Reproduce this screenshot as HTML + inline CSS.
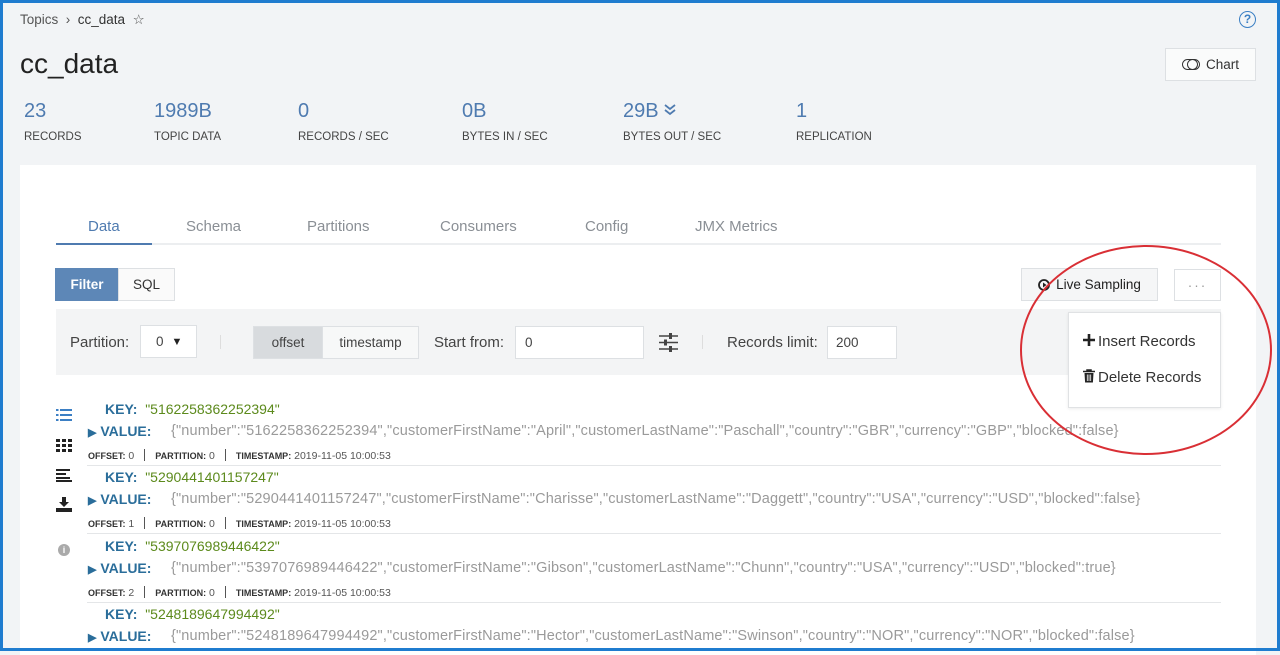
<!DOCTYPE html>
<html><head><meta charset="utf-8"><style>
*{margin:0;padding:0;box-sizing:border-box}
body{width:1280px;height:651px;overflow:hidden;font-family:"Liberation Sans",sans-serif;background:#f2f4f6;position:relative;color:#333}
.frame{position:absolute;left:0;top:0;width:1280px;height:651px;border:3px solid #1f7ccf;z-index:50;pointer-events:none}
.a{position:absolute;white-space:nowrap}
.stat .n{font-size:20px;color:#4f7bb0}
.stat .l{font-size:11.5px;color:#444;margin-top:8px}
.panel{position:absolute;left:20px;top:165px;width:1236px;height:490px;background:#fff}
.tab{position:absolute;top:218px;font-size:15px;color:#8a8f95}
.btn{position:absolute;border:1px solid #dde0e3;background:#f5f6f7;font-size:13.5px;display:flex;align-items:center;justify-content:center}
.key{font-size:14px}
.kl{color:#2a6d9a;font-weight:bold}
.kv{color:#5c8a1c}
.val{font-size:14.5px;color:#9a9a9a;letter-spacing:0.15px}
.meta{font-size:10.5px;color:#555}
.meta b{font-size:9px;color:#333}
.meta .sep{display:inline-block;width:1px;height:12px;background:#555;margin:0 10px;vertical-align:-2px}
.hr{position:absolute;left:87px;width:1134px;height:1px;background:#e4e6e8}
</style></head><body>
<div class="frame"></div>
<div class="a" style="left:20px;top:12px;font-size:13.5px;color:#555">Topics &nbsp;›&nbsp; <span style="color:#333">cc_data</span> &nbsp;☆</div>
<div class="a" style="left:1239px;top:11px;width:17px;height:17px;border:1.6px solid #3b7fc4;border-radius:50%;color:#3b7fc4;font-size:12px;font-weight:bold;text-align:center;line-height:14px">?</div>
<div class="a" style="left:20px;top:48px;font-size:28px;color:#222">cc_data</div>
<div class="btn" style="left:1165px;top:48px;width:91px;height:33px;background:#fafbfb;color:#333"><span style="display:inline-block;width:18px;height:11px;border:1.5px solid #333;border-radius:6px;margin-right:6px;position:relative"><span style="position:absolute;left:4px;top:-1.5px;width:11px;height:11px;border:1.5px solid #333;border-radius:50%"></span></span>Chart</div>
<div class="a stat" style="left:24px;top:100px"><div class="n">23</div><div class="l">RECORDS</div></div>
<div class="a stat" style="left:154px;top:100px"><div class="n">1989B</div><div class="l">TOPIC DATA</div></div>
<div class="a stat" style="left:298px;top:100px"><div class="n">0</div><div class="l">RECORDS / SEC</div></div>
<div class="a stat" style="left:462px;top:100px"><div class="n">0B</div><div class="l">BYTES IN / SEC</div></div>
<div class="a stat" style="left:623px;top:100px"><div class="n">29B <svg width="12" height="12" viewBox="0 0 12 12" style="vertical-align:1px"><path d="M1 1l5 4 5-4M1 6l5 4 5-4" fill="none" stroke="#4f7bb0" stroke-width="1.8"/></svg></div><div class="l">BYTES OUT / SEC</div></div>
<div class="a stat" style="left:796px;top:100px"><div class="n">1</div><div class="l">REPLICATION</div></div>
<div class="panel"></div>
<div class="tab" style="left:88px;color:#4f7bb0">Data</div>
<div class="tab" style="left:186px">Schema</div>
<div class="tab" style="left:307px">Partitions</div>
<div class="tab" style="left:440px">Consumers</div>
<div class="tab" style="left:585px">Config</div>
<div class="tab" style="left:695px">JMX Metrics</div>
<div class="a" style="left:56px;top:243px;width:1165px;height:2px;background:#eceef0"></div>
<div class="a" style="left:56px;top:243px;width:96px;height:2px;background:#4f7bb0"></div>
<div class="btn" style="left:55px;top:268px;width:64px;height:33px;background:#5d87b7;border-color:#5d87b7;color:#fff;font-weight:bold">Filter</div>
<div class="btn" style="left:118px;top:268px;width:57px;height:33px;background:#fafafa">SQL</div>
<div class="btn" style="left:1021px;top:268px;width:137px;height:33px;color:#222"><svg width="12" height="12" viewBox="0 0 12 12" style="margin-right:6px"><circle cx="6" cy="6" r="5" fill="none" stroke="#222" stroke-width="1.8"/><path d="M5 3.5v5l3.5-2.5z" fill="#222"/></svg>Live Sampling</div>
<div class="btn" style="left:1174px;top:269px;width:47px;height:32px;background:#fff;color:#999;letter-spacing:2px">···</div>
<div class="a" style="left:56px;top:309px;width:1165px;height:66px;background:#f3f4f5"></div>
<div class="a" style="left:70px;top:334px;font-size:15px;color:#444">Partition:</div>
<div class="btn" style="left:140px;top:325px;width:57px;height:33px;background:#fff;justify-content:flex-start;padding-left:15px;color:#444">0 <span style="margin-left:8px;font-size:11px;color:#222">▼</span></div>
<div class="a" style="left:220px;top:335px;width:1px;height:14px;background:#ddd"></div>
<div class="btn" style="left:253px;top:326px;width:70px;height:33px;background:#d8dbde;color:#444">offset</div>
<div class="btn" style="left:322px;top:326px;width:97px;height:33px;background:#f7f8f8;color:#444">timestamp</div>
<div class="a" style="left:434px;top:334px;font-size:15px;color:#444">Start from:</div>
<div class="btn" style="left:515px;top:326px;width:129px;height:33px;background:#fff;justify-content:flex-start;padding-left:9px;color:#444">0</div>
<svg class="a" style="left:659px;top:333px" width="19" height="19" viewBox="0 0 19 19"><g stroke="#444" stroke-width="1.6"><line x1="0" y1="3" x2="19" y2="3"/><line x1="0" y1="9.5" x2="19" y2="9.5"/><line x1="0" y1="16" x2="19" y2="16"/></g><g fill="#444"><rect x="10" y="0" width="3" height="6"/><rect x="5" y="6.5" width="3" height="6"/><rect x="10" y="13" width="3" height="6"/></g></svg>
<div class="a" style="left:702px;top:335px;width:1px;height:14px;background:#ddd"></div>
<div class="a" style="left:727px;top:334px;font-size:15px;color:#444">Records limit:</div>
<div class="btn" style="left:827px;top:326px;width:70px;height:33px;background:#fff;justify-content:flex-start;padding-left:8px;color:#444">200</div>
<div class="a" style="left:1068px;top:312px;width:153px;height:96px;background:#fff;border:1px solid #e0e2e4;box-shadow:0 1px 3px rgba(0,0,0,.08)"></div>
<div class="a" style="left:1083px;top:333px;font-size:15px;color:#333"><svg width="12" height="12" viewBox="0 0 12 12" style="margin-right:3px"><path d="M6 0v12M0 6h12" stroke="#222" stroke-width="2.6"/></svg>Insert Records</div>
<div class="a" style="left:1083px;top:369px;font-size:15px;color:#333"><svg width="12" height="14" viewBox="0 0 12 14" style="margin-right:3px;vertical-align:-1px"><path d="M0 2.5h12M4 2.5V1h4v1.5" stroke="#222" stroke-width="1.5" fill="none"/><path d="M1.5 4h9l-.6 9.5H2.1z" fill="#222"/><path d="M4.3 5.5v6.5M6 5.5v6.5M7.7 5.5v6.5" stroke="#fff" stroke-width=".8"/></svg>Delete Records</div>
<div class="a" style="left:1020px;top:245px;width:252px;height:210px;border:2.5px solid #d92f35;border-radius:50%;z-index:10"></div>
<svg class="a" style="left:56px;top:408px" width="16" height="14" viewBox="0 0 16 14"><g fill="#3b7fc4"><rect x="0" y="1" width="2.5" height="2"/><rect x="4" y="1" width="12" height="2"/><rect x="0" y="6" width="2.5" height="2"/><rect x="4" y="6" width="12" height="2"/><rect x="0" y="11" width="2.5" height="2"/><rect x="4" y="11" width="12" height="2"/></g></svg>
<svg class="a" style="left:56px;top:439px" width="16" height="13" viewBox="0 0 16 13"><g fill="#222"><rect x="0" y="0" width="4" height="3"/><rect x="6" y="0" width="4" height="3"/><rect x="12" y="0" width="4" height="3"/><rect x="0" y="5" width="4" height="3"/><rect x="6" y="5" width="4" height="3"/><rect x="12" y="5" width="4" height="3"/><rect x="0" y="10" width="4" height="3"/><rect x="6" y="10" width="4" height="3"/><rect x="12" y="10" width="4" height="3"/></g></svg>
<svg class="a" style="left:56px;top:469px" width="16" height="13" viewBox="0 0 16 13"><g fill="#222"><rect x="0" y="0" width="14" height="2"/><rect x="0" y="4" width="10" height="2"/><rect x="0" y="8" width="14" height="2"/><rect x="0" y="11" width="16" height="2"/></g></svg>
<svg class="a" style="left:56px;top:497px" width="16" height="15" viewBox="0 0 16 15"><path d="M6 0h4v5h3l-5 5-5-5h3z" fill="#222"/><path d="M0 11h16v4H0z" fill="#222"/></svg>
<div class="a" style="left:58px;top:544px;width:12px;height:12px;border-radius:50%;background:#aaa;color:#fff;font-size:9px;text-align:center;line-height:12px;font-weight:bold">i</div>
<div class="a key" style="left:105px;top:401px"><span class="kl">KEY:</span>&nbsp; <span class="kv">"5162258362252394"</span></div>
<div class="a key" style="left:88px;top:423px"><span class="kl" style="font-size:11px">▶</span> <span class="kl">VALUE:</span></div>
<div class="a val" style="left:171px;top:423px">{"number":"5162258362252394","customerFirstName":"April","customerLastName":"Paschall","country":"GBR","currency":"GBP","blocked":false}</div>
<div class="a meta" style="left:88px;top:449px"><b>OFFSET:</b> 0<span class="sep"></span><b>PARTITION:</b> 0<span class="sep"></span><b>TIMESTAMP:</b> 2019-11-05 10:00:53</div>
<div class="hr" style="top:465px"></div>
<div class="a key" style="left:105px;top:469px"><span class="kl">KEY:</span>&nbsp; <span class="kv">"5290441401157247"</span></div>
<div class="a key" style="left:88px;top:491px"><span class="kl" style="font-size:11px">▶</span> <span class="kl">VALUE:</span></div>
<div class="a val" style="left:171px;top:491px">{"number":"5290441401157247","customerFirstName":"Charisse","customerLastName":"Daggett","country":"USA","currency":"USD","blocked":false}</div>
<div class="a meta" style="left:88px;top:517px"><b>OFFSET:</b> 1<span class="sep"></span><b>PARTITION:</b> 0<span class="sep"></span><b>TIMESTAMP:</b> 2019-11-05 10:00:53</div>
<div class="hr" style="top:533px"></div>
<div class="a key" style="left:105px;top:538px"><span class="kl">KEY:</span>&nbsp; <span class="kv">"5397076989446422"</span></div>
<div class="a key" style="left:88px;top:560px"><span class="kl" style="font-size:11px">▶</span> <span class="kl">VALUE:</span></div>
<div class="a val" style="left:171px;top:560px">{"number":"5397076989446422","customerFirstName":"Gibson","customerLastName":"Chunn","country":"USA","currency":"USD","blocked":true}</div>
<div class="a meta" style="left:88px;top:586px"><b>OFFSET:</b> 2<span class="sep"></span><b>PARTITION:</b> 0<span class="sep"></span><b>TIMESTAMP:</b> 2019-11-05 10:00:53</div>
<div class="hr" style="top:602px"></div>
<div class="a key" style="left:105px;top:606px"><span class="kl">KEY:</span>&nbsp; <span class="kv">"5248189647994492"</span></div>
<div class="a key" style="left:88px;top:628px"><span class="kl" style="font-size:11px">▶</span> <span class="kl">VALUE:</span></div>
<div class="a val" style="left:171px;top:628px">{"number":"5248189647994492","customerFirstName":"Hector","customerLastName":"Swinson","country":"NOR","currency":"NOR","blocked":false}</div>
</body></html>
